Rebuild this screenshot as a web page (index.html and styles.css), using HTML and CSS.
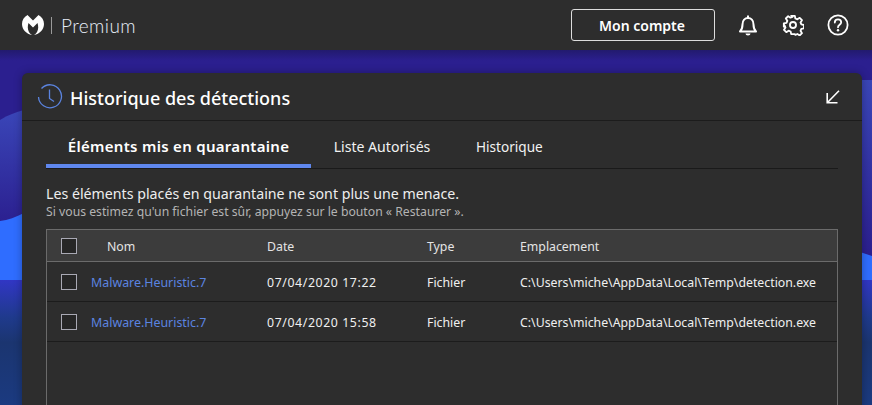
FILE: index.html
```html
<!DOCTYPE html>
<html lang="fr">
<head>
<meta charset="utf-8">
<title>Historique des détections</title>
<link rel="stylesheet" href="styles.css">
</head>
<body>
<header class="topbar">
  <div class="brand">
    <svg class="logo" width="22" height="20" viewBox="0 0 22 20"><path fill="#fff" d="M5.500 0C2 2 0 5 0 9c0 5.500 4.500 10 10 11-2.500-1.500-4.200-4.200-4.200-7.500 0-1.500.2-3 .7-4.500L11 12.500 15.500 8c.5 1.500.7 3 .7 4.500 0 3.300-1.700 6-4.200 7.500 5.500-1 10-5.500 10-11 0-4-2-7-5.500-9L11 5.500z"/></svg>
    <span class="brand-sep"></span>
    <span class="brand-name">Premium</span>
  </div>
  <div class="actions">
    <button class="account">Mon compte</button>
    <svg class="icon" width="22" height="22" viewBox="0 0 22 22" fill="none" stroke="#fff" stroke-width="2"><path d="M3 17.500c1.500-1.500 2.500-3 2.500-7C5.500 6.500 8 4 11 4s5.500 2.500 5.500 6.500c0 4 1 5.500 2.500 7z" stroke-linejoin="round"/><path d="M8.500 19.500a2.500 2 0 0 0 5 0z" fill="#fff" stroke="none"/><path d="M11 1.500v2.500"/></svg>
    <svg class="icon" width="22" height="22" viewBox="0 0 24 24" fill="none" stroke="#fff" stroke-width="2" stroke-linejoin="round"><circle cx="12" cy="12" r="3.300"/><path d="M10 2h4l.6 2.900 2.200.9 2.500-1.600 2.500 2.500-1.600 2.500.9 2.200 2.900.6v3.600l-2.900.6-.9 2.200 1.600 2.500-2.500 2.500-2.500-1.600-2.200.9L14 22h-4l-.6-2.900-2.200-.9-2.500 1.600-2.500-2.500 1.600-2.500-.9-2.200L2 13.800v-3.600l2.900-.6.900-2.200-1.600-2.500 2.500-2.500 2.500 1.600 2.200-.9z"/></svg>
    <svg class="icon" width="22" height="22" viewBox="0 0 22 22" fill="none" stroke="#fff" stroke-width="1.800"><circle cx="11" cy="11" r="9.600"/><path d="M7.800 8.500c0-2 1.500-3.200 3.200-3.200s3.200 1.200 3.200 3c0 2.500-3.200 2.500-3.200 5" stroke-linecap="round"/><circle cx="11" cy="16.200" r="1.200" fill="#fff" stroke="none"/></svg>
  </div>
</header>
<main class="stage">
  <svg class="waves" width="872" height="355" viewBox="0 0 872 355" preserveAspectRatio="none">
    <defs>
      <linearGradient id="bottom" x1="0" y1="0" x2="0" y2="1"><stop offset="0" stop-color="#3136c4"/><stop offset=".3" stop-color="#1f3a8c"/><stop offset=".5" stop-color="#1b3570"/><stop offset="1" stop-color="#1b3a80"/></linearGradient>
      <linearGradient id="mid" x1="0" y1="0" x2="0" y2="1"><stop offset="0" stop-color="#3a46b8"/><stop offset="1" stop-color="#2b1f8f"/></linearGradient>
      <linearGradient id="top" x1="0" y1="0" x2="0" y2="1"><stop offset="0" stop-color="#221a6e"/><stop offset=".03" stop-color="#2b1f8f"/><stop offset="1" stop-color="#2b1f8f"/></linearGradient>
    </defs>
    <rect width="872" height="355" fill="url(#top)"/>
    <path d="M0 70C8 65 16 62 24 60V175H0z" fill="url(#mid)"/>
    <path d="M0 171C8 170 16 167 24 163V230H0z" fill="#2f6dff"/>
    <path d="M860 30H872V205H860z" fill="url(#mid)"/>
    <path d="M860 202L872 206V230H860z" fill="#2f6dff"/>
    <rect y="230" width="872" height="125" fill="url(#bottom)"/>
  </svg>
  <section class="panel">
    <div class="panel-head">
      <svg class="clock" width="26" height="26" viewBox="0 0 26 26" fill="none" stroke="#5b84e0" stroke-width="1.300"><path d="M4.500 4.500A11.500 11.500 0 1 1 1.500 13"/><path d="M12.500 5.500v9l4.500 3"/></svg>
      <h1 class="panel-title">Historique des détections</h1>
      <svg class="collapse" width="14" height="14" viewBox="0 0 14 14" fill="none" stroke="#fff" stroke-width="1.600"><path d="M13 .8L1.500 12.500M1.200 3V12.800H11.500"/></svg>
    </div>
    <div class="panel-body">
      <nav class="tabs">
        <a class="tab tab-active">Éléments mis en quarantaine</a>
        <a class="tab">Liste Autorisés</a>
        <a class="tab">Historique</a>
      </nav>
      <p class="lead">Les éléments placés en quarantaine ne sont plus une menace.</p>
      <p class="hint">Si vous estimez qu'un fichier est sûr, appuyez sur le bouton « Restaurer ».</p>
      <div class="table">
        <div class="row row-head">
          <span class="check check-head"></span><span class="c-name c-name-head">Nom</span><span class="c-date">Date</span><span class="c-type">Type</span><span class="c-loc">Emplacement</span>
        </div>
        <div class="row">
          <span class="check"></span><a class="c-name link">Malware.Heuristic.7</a><span class="c-date c-stamp">07/04/2020 17:22</span><span class="c-type">Fichier</span><span class="c-loc">C:\Users\miche\AppData\Local\Temp\detection.exe</span>
        </div>
        <div class="row">
          <span class="check"></span><a class="c-name link">Malware.Heuristic.7</a><span class="c-date c-stamp">07/04/2020 15:58</span><span class="c-type">Fichier</span><span class="c-loc">C:\Users\miche\AppData\Local\Temp\detection.exe</span>
        </div>
      </div>
    </div>
  </section>
</main>
</body>
</html>
```
FILE: styles.css
```css
* { box-sizing: border-box; }
html, body { margin: 0; height: 100%; overflow: hidden; }
body { width: 872px; height: 405px; background: #2d2d2d; color: #fff; font-family: "Noto Sans", "Open Sans", sans-serif; font-size: 13px; }
p, h1 { margin: 0; }

.topbar { height: 50px; background: #2d2d2d; display: flex; align-items: center; justify-content: space-between; padding: 0 23px 0 22px; }
.brand { display: flex; align-items: center; }
.logo { display: block; }
.brand-sep { width: 1px; height: 17px; background: #9a9a9a; margin: 0 9px 0 7px; }
.brand-name { font-size: 19px; color: #e8eef8; font-family: "Lato", sans-serif; font-weight: 300; letter-spacing: .4px; }
.actions { display: flex; align-items: center; }
.account { width: 144px; height: 32px; background: transparent; border: 1px solid #ddd; border-radius: 3px; color: #fff; font: 600 14px "Noto Sans", sans-serif; margin-right: 22px; padding: 0 2px 0 0; }
.icon { display: block; margin-left: 23px; }
.account + .icon { margin-left: 0; }

.stage { position: relative; height: 355px; overflow: hidden; padding: 23px 10px 0 22px; }
.waves { position: absolute; left: 0; top: 0; }
.panel { position: relative; height: 340px; background: #2d2d2d; border-radius: 6px 6px 0 0; box-shadow: 0 0 8px rgba(0,0,0,.3); }
.panel-head { height: 48px; display: flex; align-items: center; padding: 0 22px 0 15px; border-bottom: 1px solid #1c1c1c; }
.clock { display: block; margin-right: 7px; }
.panel-title { font-size: 18px; font-weight: 500; flex: 1; padding-top: 2px; }
.collapse { display: block; margin-top: 1px; }
.panel-body { padding: 0 24px; }
.tabs { display: flex; height: 48px; border-bottom: 1px solid #1a1a1a; }
.tab { display: flex; align-items: center; justify-content: center; font-size: 14px; height: 47px; color: #f2f2f2; padding-top: 3px; }
.tab:nth-child(2) { width: 118px; margin-left: 12px; font-size: 14.100px; }
.tab:nth-child(3) { margin-left: 35px; font-size: 13.600px; }
.tab-active { width: 265px; font-size: 15px; letter-spacing: .3px; font-weight: 600; border-bottom: 4px solid #5f87ee; color: #fff; padding-top: 6px; }
.lead { margin-top: 15px; font-size: 14.200px; color: #eee; line-height: 18px; padding-top: 1px; }
.hint { font-size: 12.230px; color: #b4b4b4; line-height: 17px; }
.table { margin-top: 9px; height: 200px; border: 1px solid #6b6b6b; border-bottom: 0; }
.row { display: flex; align-items: center; height: 40px; border-bottom: 1px solid #1c1c1c; font-size: 12.300px; color: #f0f0f0; padding-left: 14px; }
.row-head { height: 32px; background: #3c3c3c; border-bottom: 1px solid #6b6b6b; color: #e4e4e4; }
.row > span:not(.check), .row > a { padding-top: 1px; }
.check { flex: none; width: 16px; height: 16px; background: #262626; border: 1px solid #a9a9b4; }
.c-name { width: 176px; margin-left: 14px; }
.c-name-head { padding-left: 16px; }
.link { color: #5b84e0; font-size: 12.400px; }
.c-date { width: 160px; }
.c-stamp { letter-spacing: .6px; }
.c-type { width: 93px; }
.c-loc { white-space: nowrap; }
```
